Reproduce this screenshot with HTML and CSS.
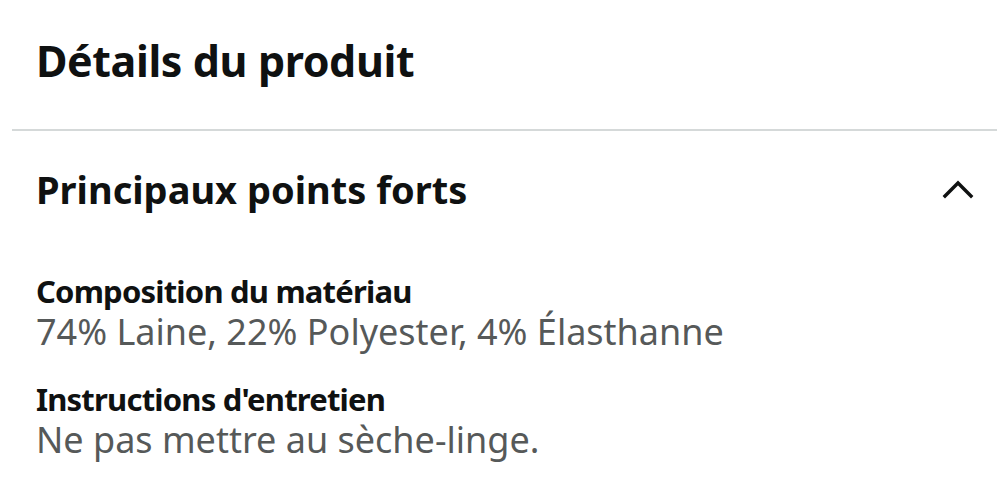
FILE: index.html
```html
<!DOCTYPE html>
<html lang="fr">
<head>
<meta charset="utf-8">
<link rel="stylesheet" href="styles.css">
</head>
<body>
<main class="page">
  <h1 class="title">Détails du produit</h1>
  <hr class="divider">
  <section class="section">
    <div class="section-head">
      <h2 class="section-title">Principaux points forts</h2>
      <svg class="chevron" width="32" height="20" viewBox="0 0 32 20"><path d="M3 17 L16 4 L29 17" fill="none" stroke="#0f1111" stroke-width="3.4" stroke-linecap="square" stroke-linejoin="miter"/></svg>
    </div>
    <dl class="facts">
      <div class="fact">
        <dt class="label">Composition du matériau</dt>
        <dd class="value">74% Laine, 22% Polyester, 4% Élasthanne</dd>
      </div>
      <div class="fact">
        <dt class="label">Instructions d'entretien</dt>
        <dd class="value">Ne pas mettre au sèche-linge.</dd>
      </div>
    </dl>
  </section>
</main>
</body>
</html>
```
FILE: styles.css
```css
html, body { margin: 0; padding: 0; background: #fff; }
body { font-family: "Noto Sans", "Open Sans", sans-serif; color: #0f1111; }
.page { width: 1008px; }
.title { margin: 0; padding: 31px 36px 0; font-size: 43px; font-weight: 700; line-height: 60px; letter-spacing: -0.4px; }
.divider { margin: 38px 11px 0 12px; border: 0; border-top: 2px solid #d5d9d9; height: 0; }
.section { padding: 32px 36px 0; }
.section-head { display: flex; align-items: center; justify-content: space-between; }
.section-title { margin: 0; font-size: 38px; font-weight: 700; line-height: 52px; }
.chevron { margin-right: -2px; }
.facts { margin: 57px 0 0; }
.fact { margin-bottom: 26px; }
.label { font-size: 31px; font-weight: 700; line-height: 38px; letter-spacing: -0.8px; }
.value { margin: 0; font-size: 36px; color: #565959; line-height: 44px; }
```
